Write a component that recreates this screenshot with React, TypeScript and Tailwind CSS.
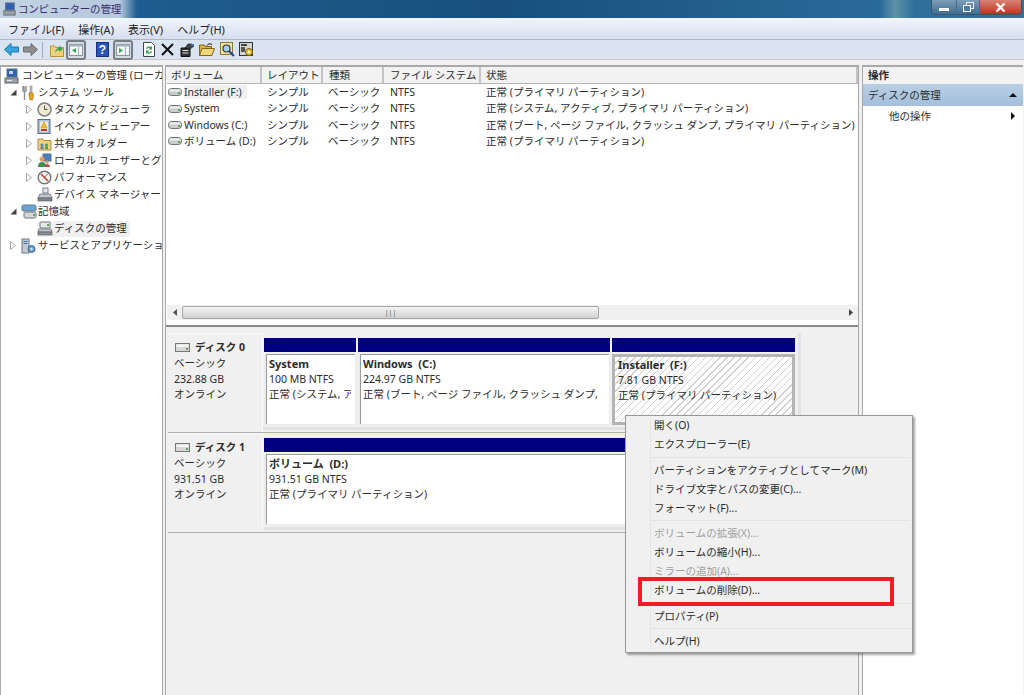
import type { ReactNode } from "react";

function HddIcon() {
  return (
    <svg width="14" height="10" viewBox="0 0 14 10" className="shrink-0">
      <rect x="0.5" y="1.5" width="13" height="7" rx="3" fill="#c9ccca" stroke="#6f7573" />
      <rect x="1.5" y="2.5" width="11" height="2" rx="1" fill="#eef0ef" />
      <rect x="10" y="5" width="2" height="2" fill="#4caf50" />
    </svg>
  );
}

function DiskLabelIcon() {
  return (
    <svg width="15" height="10" viewBox="0 0 15 10" className="shrink-0">
      <rect x="0.5" y="0.5" width="14" height="8" fill="#d6d8d8" stroke="#777" />
      <rect x="1.5" y="1.5" width="12" height="2.5" fill="#f4f5f5" />
      <rect x="11" y="5" width="2" height="2" fill="#5a9f5a" />
    </svg>
  );
}

function ComputerIcon() {
  return (
    <svg width="15" height="16" viewBox="0 0 15 16">
      <rect x="3" y="1" width="10" height="8" fill="#2f62b5" stroke="#5b6d86" />
      <rect x="5" y="3" width="4" height="3" fill="#bcd8f5" />
      <rect x="1" y="10" width="13" height="5" fill="#9aa3ab" stroke="#5d646b" />
      <rect x="3" y="12" width="5" height="1" fill="#e6e8ea" />
    </svg>
  );
}

function ToolsIcon() {
  return (
    <svg width="14" height="16" viewBox="0 0 14 16">
      <path d="M3 1v4M2 1v5h3V1M3.5 6v9" stroke="#8b8f92" strokeWidth="1.4" fill="none" />
      <rect x="9" y="1" width="2" height="7" fill="#bfc3c6" stroke="#777" strokeWidth="0.5" />
      <path d="M8 8h4l.5 3-1 4h-2.500l-1-4z" fill="#e8a417" stroke="#a56f0c" strokeWidth="0.6" />
    </svg>
  );
}

function ClockIcon() {
  return (
    <svg width="15" height="15" viewBox="0 0 15 15">
      <circle cx="7.500" cy="7.500" r="6.500" fill="#f0e9d2" stroke="#7d7f84" strokeWidth="1.500" />
      <path d="M7.500 3.500v4h3" stroke="#555" strokeWidth="1" fill="none" />
    </svg>
  );
}

function EventIcon() {
  return (
    <svg width="14" height="15" viewBox="0 0 14 15">
      <rect x="1" y="0.500" width="12" height="14" fill="#aebfd6" stroke="#566a8c" />
      <rect x="3" y="2.500" width="8" height="10" fill="#f3ead0" />
      <path d="M7 3l3 6H4z" fill="#efc02c" stroke="#b87b10" strokeWidth="0.5" />
      <rect x="4" y="10" width="6" height="2" fill="#c4392f" />
    </svg>
  );
}

function ShareIcon() {
  return (
    <svg width="15" height="15" viewBox="0 0 15 15">
      <path d="M1 3h5l1 1.500h7V14H1z" fill="#ecd27f" stroke="#a88b3d" />
      <circle cx="5" cy="9" r="1.500" fill="#5a7fb0" />
      <circle cx="9.500" cy="9" r="1.500" fill="#4a9c52" />
      <rect x="3.500" y="10.500" width="3" height="2.500" fill="#5a7fb0" />
      <rect x="8" y="10.500" width="3" height="2.500" fill="#4a9c52" />
    </svg>
  );
}

function UsersIcon() {
  return (
    <svg width="15" height="15" viewBox="0 0 15 15">
      <rect x="6" y="1" width="8" height="7" fill="#4b7cc4" stroke="#5b6d86" />
      <circle cx="5" cy="6" r="2.500" fill="#d8a060" />
      <path d="M1 14c0-4 2-5 4-5s4 1 4 5z" fill="#3f8f55" />
      <circle cx="10" cy="9" r="1.800" fill="#d8a060" />
      <path d="M7.500 14c0-2 1-3 2.500-3s3 1 3 3z" fill="#b7513f" />
    </svg>
  );
}

function PerfIcon() {
  return (
    <svg width="15" height="15" viewBox="0 0 15 15">
      <circle cx="7.500" cy="7.500" r="6.300" fill="#f5f3ee" stroke="#6f7478" strokeWidth="1.400" />
      <path d="M4 4l7 7" stroke="#c9301f" strokeWidth="1.400" />
      <path d="M11 3.500L7.500 7.500" stroke="#555" strokeWidth="0.800" />
    </svg>
  );
}

function DeviceIcon() {
  return (
    <svg width="16" height="15" viewBox="0 0 16 15">
      <rect x="6" y="1" width="5" height="5" fill="#e3e7ea" stroke="#79818a" />
      <path d="M3 7h10l2 4H1z" fill="#c2c8cd" stroke="#667" strokeWidth="0.800" />
      <rect x="1" y="11" width="14" height="3" fill="#7e868d" stroke="#555" strokeWidth="0.600" />
    </svg>
  );
}

function StorageIcon() {
  return (
    <svg width="16" height="15" viewBox="0 0 16 15">
      <rect x="1" y="1" width="14" height="6" rx="1.500" fill="#6ea3cf" stroke="#5f7a91" />
      <rect x="3" y="8" width="12" height="6" rx="1.500" fill="#d2d6d8" stroke="#6d7478" />
      <rect x="12" y="10" width="2" height="2" fill="#4caf50" />
    </svg>
  );
}

function DiskMgmtIcon() {
  return (
    <svg width="16" height="15" viewBox="0 0 16 15">
      <rect x="3" y="1" width="10" height="6" rx="1" fill="#e6e8ea" stroke="#757b80" />
      <rect x="10" y="3" width="2" height="2" fill="#4caf50" />
      <path d="M2 8h12l1 3H1z" fill="#c6cacd" stroke="#666d72" strokeWidth="0.800" />
      <rect x="1" y="11" width="14" height="3" fill="#8a9096" stroke="#555" strokeWidth="0.600" />
    </svg>
  );
}

function ServicesIcon() {
  return (
    <svg width="15" height="16" viewBox="0 0 15 16">
      <rect x="1" y="1" width="7" height="14" fill="#c3cad1" stroke="#6f7880" />
      <rect x="2.500" y="3" width="4" height="1" fill="#3a6fb0" />
      <rect x="2.500" y="5" width="4" height="1" fill="#3a6fb0" />
      <circle cx="10.500" cy="11" r="3.500" fill="#6c9cc9" stroke="#3e6a94" />
      <circle cx="10.500" cy="11" r="1.200" fill="#e8eef4" />
    </svg>
  );
}

function TreeArrow({ open }: { open?: boolean }) {
  if (open) {
    return (
      <svg width="7" height="7" viewBox="0 0 7 7">
        <path d="M6.500 0.500V6.500H0.500z" fill="#404040" />
      </svg>
    );
  }
  return (
    <svg width="6" height="9" viewBox="0 0 6 9">
      <path d="M0.500 0.500L5.500 4.500L0.500 8.500z" fill="#fff" stroke="#a6a6a6" />
    </svg>
  );
}

function TreeRow(props: {
  level: number;
  arrow?: "open" | "closed";
  icon: ReactNode;
  label: string;
  selected?: boolean;
}) {
  let pad = props.level === 0 ? "pl-[3px]" : props.level === 1 ? "pl-[9px]" : "pl-[25px]";
  return (
    <div className={"flex items-center h-[17px] whitespace-nowrap " + pad}>
      {props.level > 0 && (
        <span className="w-[11px] shrink-0 flex items-center justify-start">
          {props.arrow && <TreeArrow open={props.arrow === "open"} />}
        </span>
      )}
      <span className={"flex items-center h-[16px] rounded-[2px] " + (props.selected ? "bg-[#f0f0f0] pr-[3px]" : "")}>
        <span className={"shrink-0 flex items-center " + (props.level === 0 ? "w-[17px]" : "w-[16px]")}>{props.icon}</span>
        <span className="pl-[1px]">{props.label}</span>
      </span>
    </div>
  );
}

function TreePane() {
  return (
    <div className="w-[163px] shrink-0 bg-white border-t-2 border-l border-r border-[#a9a9a9] overflow-hidden">
      <TreeRow level={0} icon={<ComputerIcon />} label="コンピューターの管理 (ローカル)" />
      <TreeRow level={1} arrow="open" icon={<ToolsIcon />} label="システム ツール" />
      <TreeRow level={2} arrow="closed" icon={<ClockIcon />} label="タスク スケジューラ" />
      <TreeRow level={2} arrow="closed" icon={<EventIcon />} label="イベント ビューアー" />
      <TreeRow level={2} arrow="closed" icon={<ShareIcon />} label="共有フォルダー" />
      <TreeRow level={2} arrow="closed" icon={<UsersIcon />} label="ローカル ユーザーとグループ" />
      <TreeRow level={2} arrow="closed" icon={<PerfIcon />} label="パフォーマンス" />
      <TreeRow level={2} icon={<DeviceIcon />} label="デバイス マネージャー" />
      <TreeRow level={1} arrow="open" icon={<StorageIcon />} label="記憶域" />
      <TreeRow level={2} icon={<DiskMgmtIcon />} label="ディスクの管理" selected />
      <TreeRow level={1} arrow="closed" icon={<ServicesIcon />} label="サービスとアプリケーション" />
    </div>
  );
}

let rows = [
  { name: "Installer (F:)", status: "正常 (プライマリ パーティション)", focus: true },
  { name: "System", status: "正常 (システム, アクティブ, プライマリ パーティション)" },
  { name: "Windows (C:)", status: "正常 (ブート, ページ ファイル, クラッシュ ダンプ, プライマリ パーティション)" },
  { name: "ボリューム (D:)", status: "正常 (プライマリ パーティション)" },
];

function HeaderCell({ className, children }: { className: string; children: string }) {
  return (
    <div className={"h-full flex items-center bg-[#f2f2f2] border-r-2 border-[#c4c4c4] overflow-hidden whitespace-nowrap " + className}>
      {children}
    </div>
  );
}

function VolumeTable() {
  return (
    <div className="h-[260px] shrink-0 bg-white border-t-2 border-[#a9a9a9] flex flex-col pl-[1px]">
      <div className="flex h-[17px] shrink-0 border-b border-[#b5b5b5]">
        <HeaderCell className="w-[95px] pl-[4px]">ボリューム</HeaderCell>
        <HeaderCell className="w-[61px] pl-[5px]">レイアウト</HeaderCell>
        <HeaderCell className="w-[61px] pl-[6px]">種類</HeaderCell>
        <HeaderCell className="w-[97px] pl-[6px]">ファイル システム</HeaderCell>
        <HeaderCell className="flex-1 pl-[5px]">状態</HeaderCell>
      </div>
      <div className="flex-1 min-h-0">
        {rows.map((r) => (
          <div key={r.name} className="flex items-center h-[16.4px] whitespace-nowrap">
            <div className="w-[100px] shrink-0 flex items-center gap-[2px] pl-[1px]">
              <HddIcon />
              <span className={r.focus ? "bg-[#f0f0f0] pr-[5px] py-[2px]" : ""}>{r.name}</span>
            </div>
            <div className="w-[61px] shrink-0">シンプル</div>
            <div className="w-[62px] shrink-0">ベーシック</div>
            <div className="w-[96px] shrink-0">NTFS</div>
            <div>{r.status}</div>
          </div>
        ))}
      </div>
      <div className="h-[15px] shrink-0 flex items-center bg-[#f0f0f0] mb-[5px]">
        <div className="w-[15px] flex justify-center">
          <svg width="4" height="7" viewBox="0 0 4 7"><path d="M4 0v7L0 3.500z" fill="#555" /></svg>
        </div>
        <div className="w-[417px] h-[13px] bg-gradient-to-b from-[#f4f4f4] to-[#d2d2d2] border border-[#a4a4a4] rounded-[2px] flex items-center justify-center text-[7px] leading-none text-[#555]">
          |||
        </div>
        <div className="flex-1" />
        <div className="w-[15px] flex justify-center">
          <svg width="4" height="7" viewBox="0 0 4 7"><path d="M0 0v7l4-3.500z" fill="#444" /></svg>
        </div>
      </div>
    </div>
  );
}

function DiskLabel({ name, type, size }: { name: string; type: string; size: string }) {
  return (
    <div className="w-[95px] shrink-0 h-full bg-[#f0f0f0] pl-[6px] pt-[6px] border-r border-t border-[#fafafa] leading-[15.5px]">
      <div className="flex items-center gap-[5px] h-[16px] font-bold">
        <span className="pl-[1px] flex items-center"><DiskLabelIcon /></span>
        <span>{name}</span>
      </div>
      <div>{type}</div>
      <div>{size}</div>
      <div>オンライン</div>
    </div>
  );
}

function Volume(props: { width: string; clip?: string; title: string; size: string; status: string; selected?: boolean }) {
  return (
    <div className={"shrink-0 flex flex-col gap-[2px] " + props.width}>
      <div className="h-[14px] bg-[#000080]" />
      {props.selected ? (
        <div className="h-[71px] border-[3px] border-[#b4b4b4] bg-[repeating-linear-gradient(135deg,#fff,#fff_4px,#d0d0d0_4px,#d0d0d0_5px)] pl-[3px] overflow-hidden whitespace-nowrap leading-[15.5px]">
          <div className="font-bold text-[11px] whitespace-pre">{props.title}</div>
          <div>{props.size}</div>
          <div>{props.status}</div>
        </div>
      ) : (
        <div className="h-[71px] bg-[#ebebeb] pl-[2px] pr-[1px] pb-[1px] flex">
          <div className="flex-1 min-w-0 border-l border-t border-[#9a9a9a] bg-white pl-[2px] pt-[1px] leading-[15.5px]">
            <div className={"overflow-hidden whitespace-nowrap " + (props.clip ?? "mr-[4px]")}>
              <div className="font-bold text-[11px] whitespace-pre">{props.title}</div>
              <div>{props.size}</div>
              <div>{props.status}</div>
            </div>
          </div>
        </div>
      )}
    </div>
  );
}

function DiskRow(props: { name: string; size: string; children: ReactNode }) {
  return (
    <div className="flex h-[100px] w-[633px] border-b border-[#b0b0b0]">
      <DiskLabel name={props.name} type="ベーシック" size={props.size} />
      <div className="flex-1 flex gap-[2px] pl-[1px] pt-[5px] border-b-[3px] border-r-[3px] border-[#e2e2e2] mb-[2px]">
        {props.children}
      </div>
    </div>
  );
}

function DiskPane() {
  return (
    <div className="flex-1 min-h-0 bg-[#f0f0f0] border-t-2 border-[#8c8c8c] pl-[2px] pt-[6px]">
      <DiskRow name="ディスク 0" size="232.88 GB">
        <Volume width="w-[92px]" title="System" size="100 MB NTFS" status="正常 (システム, アクティブ, プライマリ パーティション)" />
        <Volume width="w-[252px]" clip="mr-[9px]" title="Windows  (C:)" size="224.97 GB NTFS" status="正常 (ブート, ページ ファイル, クラッシュ ダンプ, プライマリ パーティション)" />
        <Volume width="w-[183px]" title="Installer  (F:)" size="7.81 GB NTFS" status="正常 (プライマリ パーティション)" selected />
      </DiskRow>
      <DiskRow name="ディスク 1" size="931.51 GB">
        <Volume width="w-[531px]" title="ボリューム  (D:)" size="931.51 GB NTFS" status="正常 (プライマリ パーティション)" />
      </DiskRow>
    </div>
  );
}

function ActionPane() {
  return (
    <div className="w-[161px] shrink-0 bg-white border-t-2 border-l border-[#a9a9a9]">
      <div className="h-[17px] flex items-center pl-[5px] font-bold bg-[#f2f2f2]">操作</div>
      <div className="h-[22px] flex items-center justify-between pl-[5px] pr-[6px] bg-gradient-to-b from-[#b9cfe4] to-[#a3bfdc]">
        <span>ディスクの管理</span>
        <svg width="8" height="4" viewBox="0 0 8 4"><path d="M0 4L4 0l4 4z" fill="#111" /></svg>
      </div>
      <div className="h-[20px] flex items-center justify-between pl-[26px] pr-[8px]">
        <span>他の操作</span>
        <svg width="4" height="8" viewBox="0 0 4 8"><path d="M0 0l4 4-4 4z" fill="#111" /></svg>
      </div>
    </div>
  );
}

function MenuRow({ label, disabled }: { label: string; disabled?: boolean }) {
  return (
    <div className={"h-[19px] flex items-center pl-[28px] whitespace-nowrap " + (disabled ? "text-[#a0a0a0]" : "text-[#2b2b2b]")}>
      {label}
    </div>
  );
}

function MenuSep() {
  return (
    <div className="h-[6.500px] flex items-center pl-[25px] pr-[2px]">
      <div className="h-[1px] w-full bg-[#e3e3e3]" />
    </div>
  );
}

function ContextMenu() {
  return (
    <div className="absolute left-[625px] top-[415px] w-[288px] h-[238px] bg-[#f0f0f0] border border-[#979797] shadow-[2px_2px_2px_rgba(0,0,0,0.35)]">
      <div className="absolute left-[24px] top-[2px] bottom-[2px] w-[1px] bg-[#e4e4e4]" />
      <MenuRow label="開く(O)" />
      <MenuRow label="エクスプローラー(E)" />
      <MenuSep />
      <MenuRow label="パーティションをアクティブとしてマーク(M)" />
      <MenuRow label="ドライブ文字とパスの変更(C)..." />
      <MenuRow label="フォーマット(F)..." />
      <MenuSep />
      <MenuRow label="ボリュームの拡張(X)..." disabled />
      <MenuRow label="ボリュームの縮小(H)..." />
      <MenuRow label="ミラーの追加(A)..." disabled />
      <MenuRow label="ボリュームの削除(D)..." />
      <MenuSep />
      <MenuRow label="プロパティ(P)" />
      <MenuSep />
      <MenuRow label="ヘルプ(H)" />
    </div>
  );
}

function ToolbarToggle({ rightPane }: { rightPane?: boolean }) {
  return (
    <div className="w-[20px] h-[20px] shrink-0 rounded-[3px] border-2 border-[#787d83] bg-[#d3dbe5] flex items-center justify-center">
      <svg width="14" height="12" viewBox="0 0 14 12">
        <rect x="0.500" y="0.500" width="13" height="11" fill="#f4f6f8" stroke="#8a949e" />
        <rect x="0.500" y="0.500" width="13" height="2" fill="#9fb0c0" />
        {rightPane ? <path d="M3 4l4 2.500L3 9z" fill="#35a848" /> : <path d="M7 4L3 6.500 7 9z" fill="#35a848" />}
        <rect x="9" y="3" width="1" height="8" fill="#a5adb5" />
      </svg>
    </div>
  );
}

function Toolbar() {
  return (
    <div className="h-[21px] flex items-center pl-[4px] bg-[#dae3f1] border-t border-[#b4b8bf] border-b border-b-[#c8ccd2]">
      <svg width="15" height="13" viewBox="0 0 15 13">
        <path d="M7 0.500L0.500 6.500 7 12.500V9h7.500V4H7z" fill="#35a3de" stroke="#2176a8" />
      </svg>
      <svg width="15" height="13" viewBox="0 0 15 13" className="ml-[4px]">
        <path d="M8 0.500L14.500 6.500 8 12.500V9H0.500V4H8z" fill="#8d8d8d" stroke="#6d6d6d" />
      </svg>
      <div className="w-[1px] h-[16px] bg-[#a6abb2] ml-[4px] mr-[7px]" />
      <svg width="14" height="14" viewBox="0 0 14 14">
        <path d="M0.500 3h4l1 1.500h8V13.500H0.500z" fill="#f0d27a" stroke="#b5933a" />
        <path d="M5 10c0-3 2-5 4-5V2.500L13 6 9 9V7c-1.500 0-3 1-4 3z" fill="#35a848" />
      </svg>
      <div className="ml-[2px]"><ToolbarToggle /></div>
      <div className="w-[1px] h-[16px] ml-[4px] mr-[5px]" />
      <svg width="13" height="15" viewBox="0 0 13 15">
        <rect width="13" height="15" fill="#2a55b8" />
        <rect x="0.500" y="0.500" width="12" height="14" fill="none" stroke="#12328a" />
        <text x="6.500" y="12" textAnchor="middle" fontSize="12" fontWeight="700" fill="#fff" fontFamily="Liberation Sans">?</text>
      </svg>
      <div className="ml-[4px]"><ToolbarToggle rightPane /></div>
      <div className="w-[1px] h-[16px] ml-[4px] mr-[4px]" />
      <svg width="14" height="15" viewBox="0 0 14 15">
        <path d="M1.500 0.500h8l3 3v11h-11z" fill="#fff" stroke="#444" />
        <path d="M4 7a3 3 0 015-2l1-1v3.500H6.500L8 6.200A1.800 1.800 0 005 7z" fill="#2f9e44" />
        <path d="M10 9a3 3 0 01-5 2l-1 1V8.500h3.500L6 10a1.800 1.800 0 003-1z" fill="#2f9e44" />
      </svg>
      <svg width="13" height="13" viewBox="0 0 13 13" className="ml-[5px]">
        <path d="M1 1l11 11M12 1L1 12" stroke="#111" strokeWidth="2" />
      </svg>
      <svg width="15" height="14" viewBox="0 0 15 14" className="ml-[6px]">
        <path d="M1 5h9v8.500H1z" fill="#333" stroke="#111" />
        <rect x="2.500" y="7" width="6" height="1" fill="#ddd" />
        <rect x="2.500" y="9.500" width="6" height="1" fill="#ddd" />
        <path d="M5 5l3-4h4l2 2-4 3z" fill="#444" stroke="#111" strokeWidth="0.600" />
        <rect x="11" y="1" width="3" height="2" fill="#3f6fc0" />
      </svg>
      <svg width="16" height="13" viewBox="0 0 16 13" className="ml-[4px]">
        <path d="M0.500 2h5l1 1.500h6V12.500H0.500z" fill="#d9b53f" stroke="#7d6620" />
        <path d="M3 5.500h12.500L13 12.500H0.500z" fill="#f2d675" stroke="#7d6620" />
        <path d="M8 2.500c1-2 3-2 5-1" stroke="#111" strokeWidth="1" fill="none" />
      </svg>
      <svg width="15" height="15" viewBox="0 0 15 15" className="ml-[5px]">
        <rect x="0.500" y="0.500" width="12" height="12" fill="#f3e5a0" stroke="#8b7a2a" />
        <circle cx="6.500" cy="6.500" r="3.500" fill="#9fd0ef" stroke="#333" strokeWidth="1.200" />
        <path d="M9 9l5 5" stroke="#1f3f8f" strokeWidth="2" />
      </svg>
      <svg width="15" height="15" viewBox="0 0 15 15" className="ml-[4px]">
        <rect x="0.500" y="0.500" width="13" height="13" fill="#d6d6cf" stroke="#333" />
        <rect x="2" y="2" width="6" height="2" fill="#444" />
        <rect x="2" y="5" width="4" height="5" fill="#555" />
        <circle cx="10" cy="10" r="3.500" fill="#e9c531" stroke="#6d5a10" />
        <circle cx="10" cy="10" r="1.200" fill="#fff6c8" />
      </svg>
    </div>
  );
}

function TitleBar() {
  return (
    <div className="h-[18px] shrink-0 flex items-start justify-between bg-[linear-gradient(90deg,#c3d3e2_0px,#b4c9dd_120px,#1f5c8f_137px,#17507f_500px,#2a6a9a_880px,#5d92a8_895px,#2f6e9b_915px,#3d6d93_1024px)]">
      <div className="flex items-center h-[18px] pl-[3px] gap-[2px] text-[#3a2a6e] tracking-[-0.2px]">
        <svg width="13" height="14" viewBox="0 0 15 16"><rect x="3" y="1" width="10" height="8" fill="#2f62b5" stroke="#5b6d86" /><rect x="1" y="10" width="13" height="5" fill="#9aa3ab" stroke="#5d646b" /></svg>
        <span>コンピューターの管理</span>
      </div>
      <div className="flex h-[15px] mr-[2px] border border-t-0 border-[#3d5468] rounded-b-[4px] overflow-hidden">
        <div className="w-[25px] flex items-center justify-center bg-gradient-to-b from-[#7c9fba] to-[#3f6c91] border-r border-[#4d6a82]">
          <div className="w-[10px] h-[3px] bg-white mt-[4px]" />
        </div>
        <div className="w-[23px] flex items-center justify-center bg-gradient-to-b from-[#7c9fba] to-[#3f6c91] border-r border-[#4d6a82]">
          <svg width="11" height="10" viewBox="0 0 11 10">
            <rect x="3.500" y="0.500" width="7" height="6" fill="none" stroke="#e8eef2" />
            <rect x="0.500" y="3.500" width="7" height="6" fill="#4f7ca0" stroke="#fff" />
          </svg>
        </div>
        <div className="w-[41px] flex items-center justify-center bg-gradient-to-b from-[#d98273] to-[#b8321f]">
          <svg width="11" height="9" viewBox="0 0 11 9"><path d="M1.500 0.500l8 8M9.500 0.500l-8 8" stroke="#fff" strokeWidth="2.400" /></svg>
        </div>
      </div>
    </div>
  );
}

function MenuBar() {
  return (
    <div className="h-[21px] shrink-0 flex items-center gap-[14px] pl-[8px] pt-[1px] bg-gradient-to-b from-[#f2f5fa] to-[#d6dff0] text-[#222] text-[11px]">
      <span>ファイル(F)</span>
      <span>操作(A)</span>
      <span>表示(V)</span>
      <span>ヘルプ(H)</span>
    </div>
  );
}

export default function App() {
  return (
    <div className="relative w-[1024px] h-[695px] overflow-hidden flex flex-col bg-white text-[#2b2b2b] text-[10.500px] leading-none font-['Noto_Sans','Noto_Sans_CJK_JP',sans-serif]">
      <TitleBar />
      <MenuBar />
      <Toolbar />
      <div className="flex-1 min-h-0 flex pt-[5px] bg-[#f0f0f0]">
        <TreePane />
        <div className="w-[2px] shrink-0 bg-[#f0f0f0]" />
        <div className="w-[694px] shrink-0 flex flex-col border-l border-r border-[#a9a9a9] bg-white">
          <VolumeTable />
          <DiskPane />
        </div>
        <div className="w-[3px] shrink-0 bg-[#f0f0f0]" />
        <ActionPane />
      </div>
      <ContextMenu />
      <div className="absolute left-[638px] top-[577px] w-[256px] h-[29px] border-4 border-[#ee1c25]" />
    </div>
  );
}
